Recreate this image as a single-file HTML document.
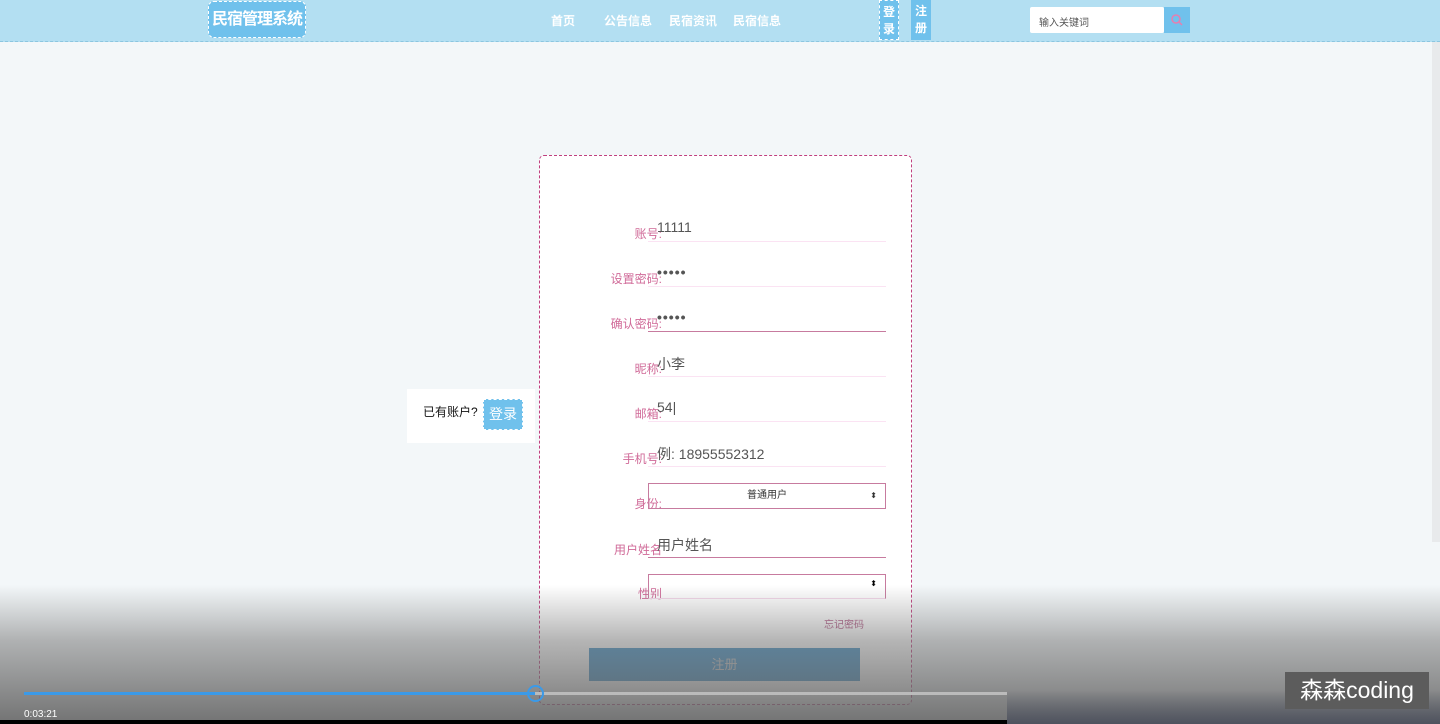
<!DOCTYPE html>
<html><head><meta charset="utf-8"><style>
*{margin:0;padding:0;box-sizing:border-box}
body{width:1440px;height:724px;overflow:hidden;background:#f3f7f9;font-family:"Liberation Sans","Noto Sans CJK SC",sans-serif;position:relative}
.a{position:absolute}
.nav{left:0;top:0;width:1440px;height:42px;background:#b3dff2;border-bottom:1px dashed #8cc6e0}
.logo{left:208px;top:1px;width:98px;height:37px;background:#70c1ec;border:1px dashed #fff;border-radius:6px;color:#fff;font-weight:bold;font-size:16px;line-height:35px;text-align:center;white-space:nowrap;letter-spacing:-1px}
.nl{top:12px;color:#fff;font-size:12px;font-weight:bold}
.vb{top:0;width:20px;height:40px;background:#70c1ec;color:#fff;font-size:12px;font-weight:bold;line-height:17px;text-align:center;padding-top:3px}
.srch{left:1030px;top:7px;width:134px;height:26px;background:#fff;border-radius:2px;font-size:10px;color:#555;padding:7px 0 0 9px}
.sbtn{left:1164px;top:7px;width:26px;height:26px;background:#70c1ec}
.card{left:539px;top:155px;width:373px;height:550px;background:#fff;border:1px dashed #c0407f;border-radius:5px}
.lb{width:122px;text-align:right;color:#d06a98;font-size:12px;letter-spacing:0}
.in{left:648px;width:238px;height:30px;border-bottom:1px solid #fbe3f3;color:#555;font-size:14px;padding:7px 0 0 9px}
.left{left:407px;top:389px;width:128px;height:54px;background:#fff}
.dim{left:0;top:585px;width:1440px;height:139px;background:linear-gradient(rgba(120,120,120,0),rgba(120,120,120,.55) 40%,rgba(100,100,100,.9))}
</style></head><body>
<div class="a nav"></div>
<div class="a logo">民宿管理系统</div>
<div class="a nl" style="left:551px">首页</div>
<div class="a nl" style="left:604px">公告信息</div>
<div class="a nl" style="left:669px">民宿资讯</div>
<div class="a nl" style="left:733px">民宿信息</div>
<div class="a vb" style="left:879px;border:1px dashed #fff">登<br>录</div>
<div class="a vb" style="left:911px">注<br>册</div>
<div class="a srch">输入关键词</div>
<div class="a sbtn"><svg width="26" height="26"><circle cx="12" cy="12" r="4" fill="none" stroke="#e57fb0" stroke-width="1.5"/><line x1="15" y1="15" x2="18" y2="18" stroke="#e57fb0" stroke-width="1.5"/></svg></div>
<div class="a" style="left:1432px;top:42px;width:8px;height:500px;background:#e8eaec"></div>

<div class="a left"><span class="a" style="left:16px;top:14px;font-size:12px;color:#111">已有账户?</span><div class="a" style="left:76px;top:10px;width:40px;height:31px;background:#70c1ec;border:1px dashed #fff;color:#fff;font-size:14px;text-align:center;line-height:29px">登录</div></div>

<div class="a card"></div>
<div class="a lb" style="left:540px;top:225px">账号:</div>
<div class="a in" style="top:212px">11111</div>
<div class="a lb" style="left:540px;top:270px">设置密码:</div>
<div class="a in" style="top:257px;font-weight:bold;letter-spacing:1px">•••••</div>
<div class="a lb" style="left:540px;top:315px">确认密码:</div>
<div class="a in" style="top:302px;border-bottom-color:#c77b9f;font-weight:bold;letter-spacing:1px">•••••</div>
<div class="a lb" style="left:540px;top:360px">昵称:</div>
<div class="a in" style="top:347px">小李</div>
<div class="a lb" style="left:540px;top:405px">邮箱:</div>
<div class="a in" style="top:392px">54|</div>
<div class="a lb" style="left:540px;top:450px">手机号:</div>
<div class="a in" style="top:437px">例: 18955552312</div>
<div class="a lb" style="left:540px;top:495px">身份:</div>
<div class="a" style="left:648px;top:483px;width:238px;height:26px;border:1px solid #c77b9f;font-size:10px;text-align:center;line-height:24px;color:#333">普通用户<span class="a" style="right:8px;top:0;font-size:8px">⬍</span></div>
<div class="a lb" style="left:540px;top:541px">用户姓名</div>
<div class="a in" style="top:528px;border-bottom-color:#c77b9f">用户姓名</div>
<div class="a lb" style="left:540px;top:585px">性别</div>
<div class="a" style="left:648px;top:574px;width:238px;height:25px;border:1px solid #c77b9f;border-bottom-color:#f5d8ea"><span class="a" style="right:8px;top:4px;font-size:8px">⬍</span></div>
<div class="a" style="left:824px;top:616px;font-size:10px;color:#b05a85">忘记密码</div>
<div class="a" style="left:589px;top:648px;width:271px;height:33px;background:#3f8fc4;color:#ccc;font-size:13px;text-align:center;line-height:33px">注册</div>

<div class="a dim"></div>
<div class="a" style="left:1007px;top:690px;width:433px;height:34px;background:linear-gradient(rgba(80,80,90,0),rgba(70,75,90,.8))"></div>
<div class="a" style="left:24px;top:692px;width:511px;height:3px;background:#3b9ae8"></div>
<div class="a" style="left:535px;top:692px;width:472px;height:3px;background:#bbb"></div>
<div class="a" style="left:527px;top:685px;width:17px;height:17px;border:2px solid #3b9ae8;border-radius:50%"></div>
<div class="a" style="left:24px;top:709px;font-size:10px;color:#fff">0:03:21</div>
<div class="a" style="left:0;top:720px;width:1007px;height:4px;background:#000"></div>
<div class="a" style="left:1285px;top:672px;width:144px;height:37px;background:#5c5c5c;color:#fff;font-size:23px;line-height:37px;text-align:center">森森coding</div>
</body></html>
